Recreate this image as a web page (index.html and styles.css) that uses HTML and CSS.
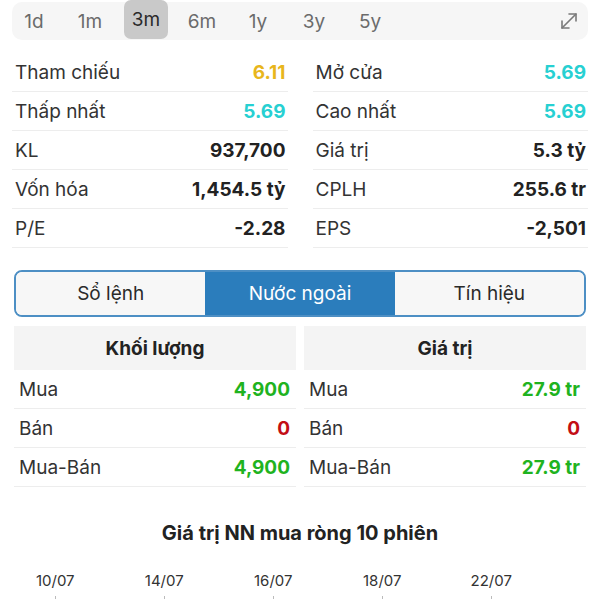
FILE: index.html
```html
<!DOCTYPE html>
<html lang="vi">
<head>
  <meta charset="UTF-8">
  <meta name="viewport" content="width=device-width, initial-scale=1.0">
  <title>Chi tiết cổ phiếu</title>
  <link rel="stylesheet" href="styles.css">
</head>
<body>
  <div class="range-bar">
    <span class="range">1d</span>
    <span class="range">1m</span>
    <span class="range active">3m</span>
    <span class="range">6m</span>
    <span class="range">1y</span>
    <span class="range">3y</span>
    <span class="range">5y</span>
    <span class="expand">
      <svg width="22" height="22" viewBox="0 0 22 22" fill="none" stroke="#7a7a7a" stroke-width="1.6" stroke-linecap="round" stroke-linejoin="round">
        <line x1="4" y1="18" x2="18" y2="4"/>
        <polyline points="11,4 18,4 18,11"/>
        <polyline points="4,11 4,18 11,18"/>
      </svg>
    </span>
  </div>

  <div class="stats">
    <div class="col">
      <div class="row"><span>Tham chiếu</span><b class="yellow">6.11</b></div>
      <div class="row"><span>Thấp nhất</span><b class="cyan">5.69</b></div>
      <div class="row"><span>KL</span><b>937,700</b></div>
      <div class="row"><span>Vốn hóa</span><b>1,454.5 tỷ</b></div>
      <div class="row"><span>P/E</span><b>-2.28</b></div>
    </div>
    <div class="col">
      <div class="row"><span>Mở cửa</span><b class="cyan">5.69</b></div>
      <div class="row"><span>Cao nhất</span><b class="cyan">5.69</b></div>
      <div class="row"><span>Giá trị</span><b>5.3 tỷ</b></div>
      <div class="row"><span>CPLH</span><b>255.6 tr</b></div>
      <div class="row"><span>EPS</span><b>-2,501</b></div>
    </div>
  </div>

  <div class="tabs">
    <div class="tab">Sổ lệnh</div>
    <div class="tab active">Nước ngoài</div>
    <div class="tab">Tín hiệu</div>
  </div>

  <div class="foreign">
    <div class="col">
      <div class="head">Khối lượng</div>
      <div class="row"><span>Mua</span><b class="green">4,900</b></div>
      <div class="row"><span>Bán</span><b class="red">0</b></div>
      <div class="row"><span>Mua-Bán</span><b class="green">4,900</b></div>
    </div>
    <div class="col">
      <div class="head">Giá trị</div>
      <div class="row"><span>Mua</span><b class="green">27.9 tr</b></div>
      <div class="row"><span>Bán</span><b class="red">0</b></div>
      <div class="row"><span>Mua-Bán</span><b class="green">27.9 tr</b></div>
    </div>
  </div>

  <h2 class="chart-title">Giá trị NN mua ròng 10 phiên</h2>

  <div class="axis">
    <div class="tick"><span>10/07</span></div>
    <div class="tick"></div>
    <div class="tick"><span>14/07</span></div>
    <div class="tick"></div>
    <div class="tick"><span>16/07</span></div>
    <div class="tick"></div>
    <div class="tick"><span>18/07</span></div>
    <div class="tick"></div>
    <div class="tick"><span>22/07</span></div>
    <div class="tick"></div>
  </div>
</body>
</html>
```

FILE: styles.css
```css
* {
  box-sizing: border-box;
}

body {
  font-family: Inter, "Liberation Sans", sans-serif;
  background: #fff;
  color: #2a2a2a;
  margin: 0;
  font-size: 19px;
}

/* thanh chọn khoảng thời gian */
.range-bar {
  display: flex;
  align-items: center;
  height: 38px;
  margin: 2px 12px 0;
  background: #f6f6f6;
  border-radius: 10px;
}

.range {
  width: 44px;
  height: 38px;
  margin-right: 12px;
  display: flex;
  align-items: center;
  justify-content: center;
  color: #6b6b6b;
  font-size: 19px;
}

.range.active {
  background: #c9c9c9;
  color: #2a2a2a;
  border-radius: 7px;
  height: 39px;
  margin-top: -3px;
}

.expand {
  margin-left: auto;
  margin-right: 8px;
  display: flex;
}

/* bảng thông số */
.stats {
  display: grid;
  grid-template-columns: 1fr 1fr;
  gap: 25px;
  margin: 13px 12px 0;
}

.row {
  display: flex;
  justify-content: space-between;
  align-items: center;
  height: 39px;
  padding: 0 2px 0 3px;
  border-bottom: 1px solid #ededed;
}

.row span {
  color: #333;
}

.row b {
  font-weight: 700;
  color: #222;
}

.yellow { color: #e8b61c !important; }
.cyan { color: #27d0d2 !important; }
.green { color: #1fb31f !important; }
.red { color: #c30f16 !important; }

/* tabs */
.tabs {
  display: flex;
  margin: 22px 14px 0;
  height: 47px;
  border: 2px solid #4d8fc4;
  border-radius: 8px;
  overflow: hidden;
}

.tab {
  flex: 1;
  display: flex;
  align-items: center;
  justify-content: center;
  background: #f7f7f7;
  color: #2a2a2a;
}

.tab.active {
  background: #2b7dbc;
  color: #fff;
}

/* nước ngoài */
.foreign {
  display: grid;
  grid-template-columns: 1fr 1fr;
  gap: 8px;
  margin: 9px 14px 0;
}

.head {
  height: 44px;
  display: flex;
  align-items: center;
  justify-content: center;
  background: #f4f4f4;
  font-weight: 700;
  color: #222;
}

.foreign .row {
  padding: 0 6px 0 5px;
}

/* biểu đồ */
.chart-title {
  font-size: 20px;
  font-weight: 700;
  text-align: center;
  color: #222;
  margin: 33px 0 0;
  line-height: 26px;
}

.axis {
  display: flex;
  margin: 27px 27px 0 28px;
}

.tick {
  flex: 1;
  display: flex;
  flex-direction: column;
  align-items: center;
  font-size: 15px;
  color: #333;
  height: 26px;
}

.tick span {
  line-height: 16px;
  height: 16px;
}

.tick span::after {
  content: "";
  display: block;
  width: 1px;
  height: 8px;
  margin: 7px auto 0;
  background: #bbb;
}
```
